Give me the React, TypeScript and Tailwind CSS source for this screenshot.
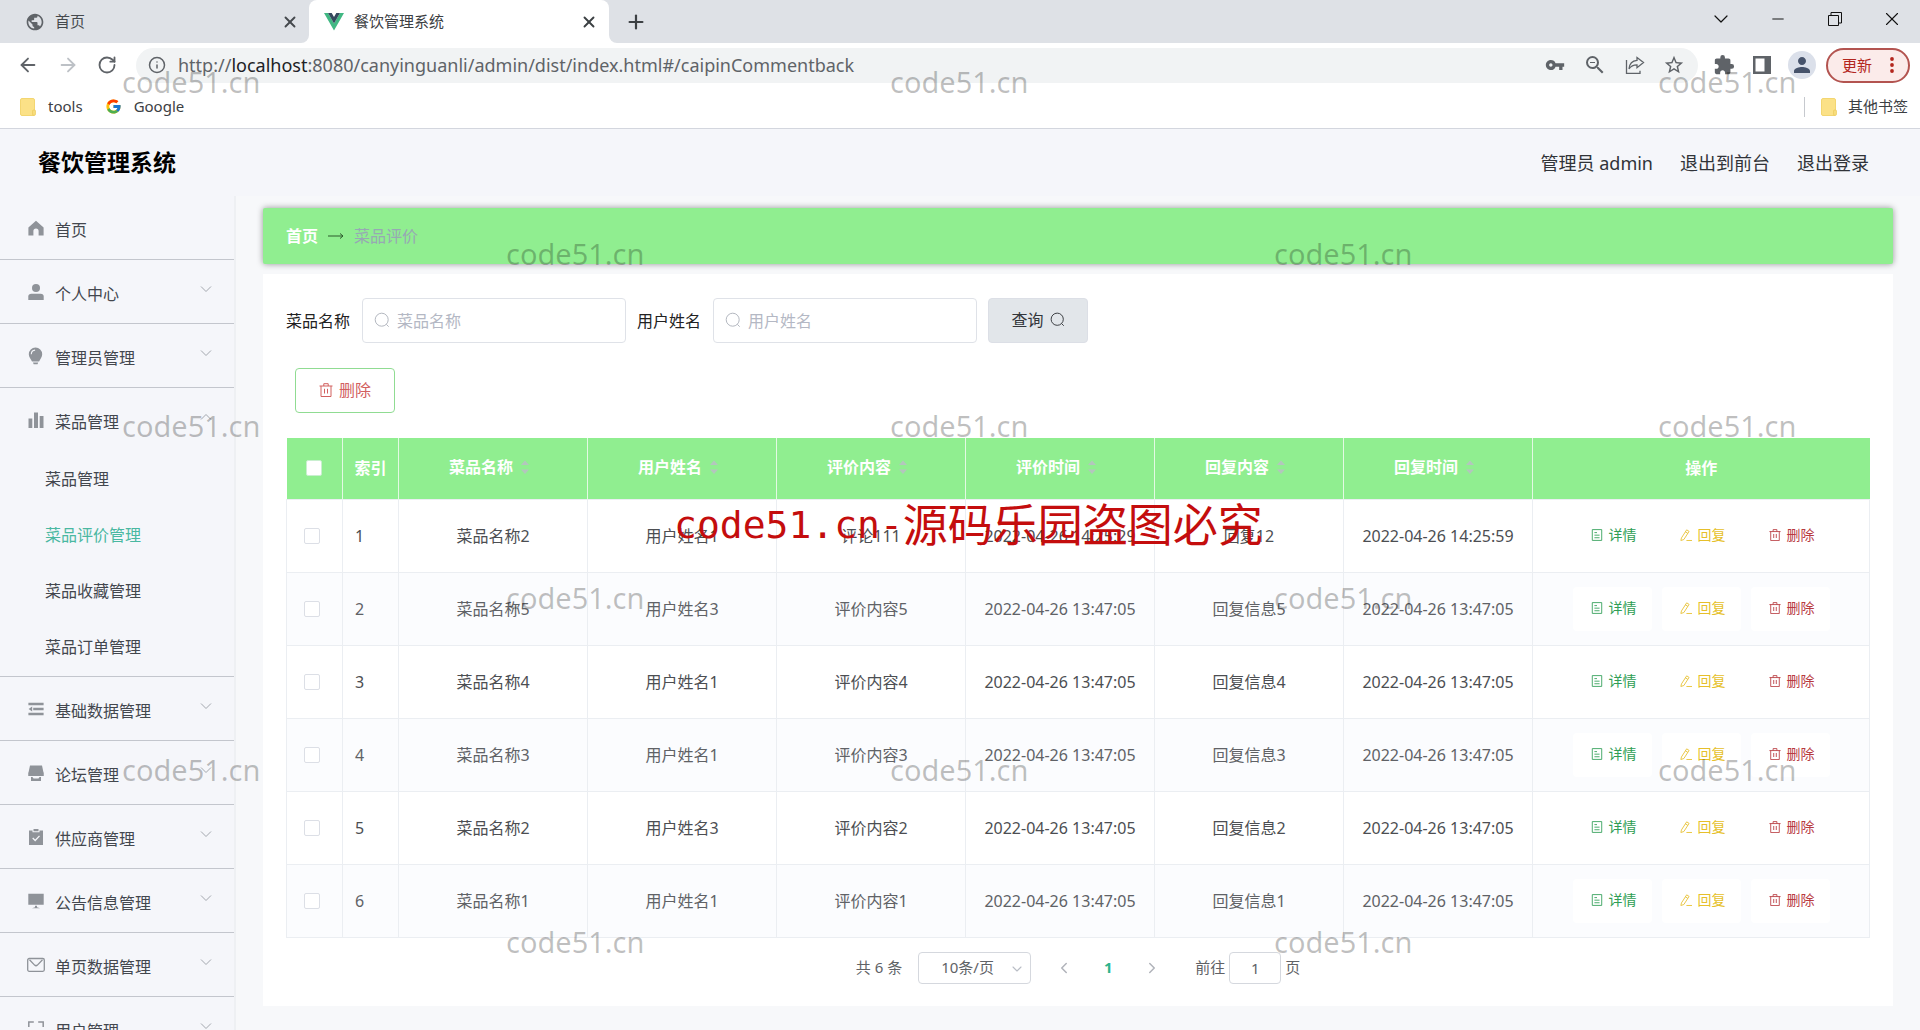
import React from 'react';
import { ArrowLeft, ArrowRight, ChevronDown, ChevronLeft, ChevronRight, Info, Minus, Plus, RotateCw, X } from 'lucide-react';
import { MdExtension, MdOutlineStarBorder, MdPerson, MdPublic, MdVpnKey, MdZoomOut } from 'react-icons/md';
import { FcGoogle } from 'react-icons/fc';

interface MenuItem {
  label: string;
  icon: React.ReactNode;
  children?: string[];
  expandable?: boolean;
}

interface CommentRow {
  dish: string;
  user: string;
  content: string;
  time: string;
  reply: string;
  replyTime: string;
}

// Filled 16px glyphs used by the side menu
function MenuIcon({ children }: { children: React.ReactNode }) {
  return (
    <svg viewBox="0 0 16 16" className="w-4 h-4 flex-shrink-0 overflow-visible" fill="#8f9399" stroke="none" aria-hidden="true">
      {children}
    </svg>
  );
}

const menu: MenuItem[] = [
  { label: '首页', icon: <MenuIcon><path d="M8 .8 15.6 7.5V15.5H10.6V11a2.6 2.6 0 0 0-5.2 0v4.5H.4V7.5z" /></MenuIcon> },
  {
    label: '个人中心',
    expandable: true,
    icon: <MenuIcon><circle cx="8" cy="4" r="4" /><path d="M.3 16v-3.4C.3 10.800 1.500 9.800 3.300 9.800h9.400c1.800 0 3 1 3 2.800V16z" /></MenuIcon>,
  },
  {
    label: '管理员管理',
    expandable: true,
    icon: (
      <MenuIcon>
        <path d="M7.500-.5a6.700 6.700 0 0 1 6.700 6.700c0 3-2 4.600-3.100 7.300H4C2.900 10.800.8 9.200.8 6.200A6.700 6.700 0 0 1 7.500-.5z" />
        <path d="M5 14.600h5.200l-.7 1.700H5.700z" />
        <path d="M3.300 6.200a4.200 4.200 0 0 1 3.800-4.100" fill="none" stroke="#f5f6fa" strokeWidth="1.100" />
      </MenuIcon>
    ),
  },
  {
    label: '菜品管理',
    expandable: true,
    children: ['菜品管理', '菜品评价管理', '菜品收藏管理', '菜品订单管理'],
    icon: <MenuIcon><path d="M.5 6.500h3.800V16H.5zM6 .5h4V16H6zM11.700 4h3.800v12h-3.800z" /></MenuIcon>,
  },
  {
    label: '基础数据管理',
    expandable: true,
    icon: <MenuIcon><path d="M.4 1.800h15.200v2.500H.4zM5.200 6.800h10.400v2.400H5.200zM.4 11.800h15.200v2.500H.4zM4.200 5.600v4.800L.6 8z" /></MenuIcon>,
  },
  {
    label: '论坛管理',
    expandable: true,
    icon: (
      <MenuIcon>
        <path d="M2 .5h12L15.600 8v3H13.300V9.200H2.700V11H.4V8z" />
        <path d="M.6 7.500h14.800v3.500H.6z" />
        <path d="M3 12h1.500l1 1.500h5l1-1.500H13v4H3z" />
      </MenuIcon>
    ),
  },
  {
    label: '供应商管理',
    expandable: true,
    icon: (
      <MenuIcon>
        <path d="M1 1.600h3.500v1.600h7V1.600H15V16H1zM5.500 0h5v2.300h-5z" />
        <path d="m4.700 9 2.500 2.500 4.300-4.600" fill="none" stroke="#f5f6fa" strokeWidth="1.300" />
      </MenuIcon>
    ),
  },
  {
    label: '公告信息管理',
    expandable: true,
    icon: <MenuIcon><path d="M.3.800h15.400v11H.3zM7 12.800h2v1.400l3 1.100H4l3-1.100z" /></MenuIcon>,
  },
  {
    label: '单页数据管理',
    expandable: true,
    icon: (
      <MenuIcon>
        <rect x="-.3" y="1.500" width="16.600" height="12.800" rx="1.500" fill="none" stroke="#8f9399" strokeWidth="1.300" />
        <path d="m1.500 2.800 5.100 5.300q1.400 1.300 2.800 0l5.100-5.300" fill="none" stroke="#8f9399" strokeWidth="1.300" />
      </MenuIcon>
    ),
  },
  {
    label: '用户管理',
    expandable: true,
    icon: (
      <MenuIcon>
        <path d="M.8 6V1h5M10.200 1h5v5M.8 10v5h5M10.200 15h5v-5" fill="none" stroke="#8f9399" strokeWidth="1.500" />
      </MenuIcon>
    ),
  },
];

const rows: CommentRow[] = [
  { dish: '菜品名称2', user: '用户姓名1', content: '评论111', time: '2022-04-26 14:25:29', reply: '回复12', replyTime: '2022-04-26 14:25:59' },
  { dish: '菜品名称5', user: '用户姓名3', content: '评价内容5', time: '2022-04-26 13:47:05', reply: '回复信息5', replyTime: '2022-04-26 13:47:05' },
  { dish: '菜品名称4', user: '用户姓名1', content: '评价内容4', time: '2022-04-26 13:47:05', reply: '回复信息4', replyTime: '2022-04-26 13:47:05' },
  { dish: '菜品名称3', user: '用户姓名1', content: '评价内容3', time: '2022-04-26 13:47:05', reply: '回复信息3', replyTime: '2022-04-26 13:47:05' },
  { dish: '菜品名称2', user: '用户姓名3', content: '评价内容2', time: '2022-04-26 13:47:05', reply: '回复信息2', replyTime: '2022-04-26 13:47:05' },
  { dish: '菜品名称1', user: '用户姓名1', content: '评价内容1', time: '2022-04-26 13:47:05', reply: '回复信息1', replyTime: '2022-04-26 13:47:05' },
];

const sortableColumns = ['菜品名称', '用户姓名', '评价内容', '评价时间', '回复内容', '回复时间'];

// Thin outline icons for the form and the table
function TrashIcon({ className }: { className: string }) {
  return (
    <svg viewBox="0 0 14 14" className={className} fill="none" stroke="currentColor" aria-hidden="true">
      <path d="M.5 3h13M2 3v10.500h10V3M4.800 3V.7h4.400V3M5.500 5.800v4.700M8.500 5.800v4.700" />
    </svg>
  );
}

function DocIcon({ className }: { className: string }) {
  return (
    <svg viewBox="0 0 14 14" className={className} fill="none" stroke="currentColor" aria-hidden="true">
      <path d="M1.500.7h11v12.600h-11zM4 4.200h3M4 7.200h6M4 10.200h6" />
    </svg>
  );
}

function EditIcon({ className }: { className: string }) {
  return (
    <svg viewBox="0 0 14 14" className={className} fill="none" stroke="currentColor" aria-hidden="true">
      <path d="M7.800 1 10.600 2.800 4.500 12.300 1 13.400 1.700 10.400zM6.300 3.300l2.800 1.800M7.500 13.400H14" />
    </svg>
  );
}

function SearchIcon({ className }: { className: string }) {
  return (
    <svg viewBox="0 0 16 16" className={className} fill="none" stroke="currentColor" aria-hidden="true">
      <circle cx="7.700" cy="7.700" r="6.500" />
      <path d="m12.300 12.300 2.400 2.400" />
    </svg>
  );
}

function FolderIcon() {
  return (
    <svg viewBox="0 0 16 18" className="w-4 h-[18px]" aria-hidden="true">
      <rect x=".5" y=".5" width="14" height="17" rx="1.500" fill="#fbe187" stroke="#f3d671" />
      <path d="M13 12h1.500a1 1 0 0 1 1 1v3a1.500 1.500 0 0 1-3 0v-3z" fill="#f7dc7c" stroke="#edcb5c" strokeWidth=".7" />
    </svg>
  );
}

function BrowserChrome() {
  return (
    <div className="bg-white border-b border-[#d3d6de] flex-shrink-0">
      {/* Tab strip */}
      <div className="flex h-[43px]">
        <div className="w-[309px] bg-[#dee1e6] rounded-br-lg flex items-center pl-[25px] pr-[10px]">
          <MdPublic className="w-5 h-5 text-[#5f6368]" />
          <span className="text-[15px] text-[#45494d] ml-[10px] flex-1">首页</span>
          <button aria-label="关闭首页"><X className="w-[18px] h-[18px] text-[#45494d]" strokeWidth={2.5} /></button>
        </div>
        <div className="w-[300px] bg-[#dee1e6]">
          <div className="h-full bg-white rounded-t-lg flex items-center pl-[15px] pr-[11px]">
            <svg viewBox="0 0 20 18" className="w-5 h-[18px]" aria-hidden="true">
              <path d="M0 0h4l6 10.500L16 0h4L10 17.500z" fill="#41b883" />
              <path d="M4 0h3.700L10 4l2.300-4H16l-6 10.500z" fill="#35495e" />
            </svg>
            <span className="text-[15px] text-[#3c4043] ml-[10px] flex-1">餐饮管理系统</span>
            <button aria-label="关闭餐饮管理系统"><X className="w-[18px] h-[18px] text-[#3c4043]" strokeWidth={2.5} /></button>
          </div>
        </div>
        <div className="flex-1 bg-[#dee1e6] rounded-bl-lg flex justify-between">
          <button aria-label="新标签页" className="pl-4"><Plus className="w-[22px] h-[22px] text-[#3c4043]" strokeWidth={2.4} /></button>
          <div className="flex h-[37px] text-[#111]">
            <button aria-label="搜索标签页" className="w-[57px] flex items-center justify-center"><ChevronDown className="w-6 h-6" strokeWidth={1.2} /></button>
            <button aria-label="最小化" className="w-[57px] flex items-center justify-center"><Minus className="w-[18px] h-[18px]" strokeWidth={1.3} /></button>
            <button aria-label="还原" className="w-[57px] flex items-center justify-center">
              <svg viewBox="0 0 14 14" className="w-[14px] h-[14px]" fill="none" stroke="currentColor"><path d="M.5 3.500h10v10H.5zM3 3.500V.5h10.500V11h-3" /></svg>
            </button>
            <button aria-label="关闭" className="w-[57px] flex items-center justify-center"><X className="w-[22px] h-[22px]" strokeWidth={1.2} /></button>
          </div>
        </div>
      </div>

      {/* Address bar */}
      <div className="flex items-center h-11 pl-[17px] pr-[10px] text-[#5f6368]">
        <button aria-label="后退" className="w-10"><ArrowLeft className="w-[22px] h-[22px]" /></button>
        <button aria-label="前进" className="w-10 text-[#bdc1c6]"><ArrowRight className="w-[22px] h-[22px]" /></button>
        <button aria-label="重新加载" className="w-[39px]"><RotateCw className="w-5 h-5" strokeWidth={2.2} /></button>
        <div className="flex-1 h-[35px] rounded-full bg-[#f1f3f4] flex items-center pl-3 pr-[13px]">
          <Info className="w-[18px] h-[18px] mr-3" />
          <span className="flex-1 text-lg text-[#5f6368]">
            http://<span className="text-[#202124]">localhost</span>:8080/canyinguanli/admin/dist/index.html#/caipinCommentback
          </span>
          <div className="flex items-center gap-[18px]">
            <MdVpnKey className="w-5 h-5" />
            <MdZoomOut className="w-6 h-6" />
            <svg viewBox="0 0 20 20" className="w-5 h-5" fill="none" stroke="currentColor" strokeWidth="1.300" aria-hidden="true">
              <path d="M1.500 5v13.300H15v-2.500M12 2.500l6.500 5L12 12.700V9.800c-3.500 0-6 1-8 4 .5-5 3.500-8 8-8.400z" />
            </svg>
            <MdOutlineStarBorder className="w-[22px] h-[22px]" />
          </div>
        </div>
        <div className="flex items-center gap-[14px] pl-[15px]">
          <MdExtension className="w-[22px] h-[22px]" />
          <svg viewBox="0 0 18 18" className="w-[18px] h-[18px] ml-1" aria-hidden="true">
            <path d="M0 0h18v18H0zM2.500 2.500v13h9v-13z" fill="#5f6368" fillRule="evenodd" />
          </svg>
          <span className="w-7 h-7 ml-[3px] rounded-full bg-[#dbe0ea] flex items-center justify-center"><MdPerson className="w-6 h-6 text-[#46536b]" /></span>
          <button className="w-[84px] h-[35px] -ml-1 rounded-full border-2 border-[#b35450] bg-[#fbebea] text-[#b3261e] text-[15px] flex items-center justify-between pl-[14px] pr-[14px]">
            更新
            <svg viewBox="0 0 4 16" className="w-1 h-4" fill="currentColor" aria-hidden="true"><circle cx="2" cy="2" r="1.900" /><circle cx="2" cy="8" r="1.900" /><circle cx="2" cy="14" r="1.900" /></svg>
          </button>
        </div>
      </div>

      {/* Bookmarks */}
      <div className="flex items-center h-[41px] pl-5 pr-3 pb-[2px] text-[15px] text-[#3c4043]">
        <a href="#tools" className="flex items-center gap-3"><FolderIcon />tools</a>
        <a href="#google" className="flex items-center gap-3 ml-[22px]"><FcGoogle className="w-[17px] h-[17px]" />Google</a>
        <a href="#others" className="flex items-center gap-[11px] ml-auto border-l border-[#c6c9ce] pl-4 h-5"><FolderIcon />其他书签</a>
      </div>
    </div>
  );
}

function Sidebar() {
  return (
    <nav className="w-[236px] flex-shrink-0 border-r-2 border-[#eef0f3] bg-[#f5f6fa] overflow-hidden text-base text-[#43474e]">
      {menu.map(item => (
        <div key={item.label} className="border-b border-[#c3c6cd]">
          <button className="w-full h-[63px] flex items-center pl-7 pr-[22px] text-left">
            {item.icon}
            <span className="ml-[11px] flex-1 pt-1">{item.label}</span>
            {item.expandable && (
              <svg viewBox="0 0 12 12" className="w-3 h-3 mb-[6px]" fill="none" stroke="#a3a7ae" aria-hidden="true">
                <path d={item.children ? 'M1 8.500 6 3.500l5 5' : 'M1 3.500l5 5 5-5'} />
              </svg>
            )}
          </button>
          {item.children && (
            <div className="pb-px">
              {item.children.map(child => (
                <a
                  key={child}
                  href="#/caipinCommentback"
                  className={`flex items-center h-14 pl-[45px] ${child === '菜品评价管理' ? 'text-[#4ab8a1]' : ''}`}
                >
                  {child}
                </a>
              ))}
            </div>
          )}
        </div>
      ))}
    </nav>
  );
}

function SearchField({ id, label }: { id: string; label: string }) {
  return (
    <div className="flex items-center">
      <label htmlFor={id} className="text-base text-[#222] mr-3">{label}</label>
      <div className="relative">
        <SearchIcon className="w-4 h-4 absolute left-3 top-[14px] text-[#b4b8c0]" />
        <input
          id={id}
          placeholder={label}
          className="w-[264px] h-[45px] border border-[#dfe2e8] rounded pl-[34px] pr-3 text-base bg-white placeholder:text-[#b4b8c4]"
        />
      </div>
    </div>
  );
}

function CommentTable() {
  return (
    <table className="w-full table-fixed border-collapse text-base">
      <colgroup>
        <col className="w-14" />
        <col className="w-14" />
        {sortableColumns.map(name => <col key={name} className="w-[189px]" />)}
        <col />
      </colgroup>
      <thead>
        <tr className="h-[61px] bg-[#90ee90] text-white">
          <th className="border-r border-[#e3f9e3]">
            <input type="checkbox" aria-label="全选" className="appearance-none block mx-auto w-4 h-4 bg-white border border-[#c9efcf] rounded-xs" />
          </th>
          <th className="border-r border-[#e3f9e3] font-bold">索引</th>
          {sortableColumns.map(name => (
            <th key={name} className="border-r border-[#e3f9e3] font-bold">
              <div className="flex items-center justify-center pb-[2px]">
                {name}
                <svg viewBox="0 0 24 16" className="w-6 h-4" fill="#b3c6bd" aria-hidden="true">
                  <path d="M12 1.500 16 6H8zM8 10.500h8L12 15z" />
                </svg>
              </div>
            </th>
          ))}
          <th className="font-bold">操作</th>
        </tr>
      </thead>
      <tbody>
        {rows.map((row, idx) => (
          <tr key={idx} className="h-[73px] text-center text-[#4c4e52] even:bg-[#fbfcfe] even:text-[#606266]">
            <td className="border border-[#ebeef2]">
              <input type="checkbox" aria-label={`选择第${idx + 1}行`} className="appearance-none block ml-[17px] w-4 h-4 bg-white border border-[#dcdfe6] rounded-xs" />
            </td>
            <td className="border border-[#ebeef2] text-left pl-3">{idx + 1}</td>
            <td className="border border-[#ebeef2]">{row.dish}</td>
            <td className="border border-[#ebeef2]">{row.user}</td>
            <td className="border border-[#ebeef2]">{row.content}</td>
            <td className="border border-[#ebeef2]">{row.time}</td>
            <td className="border border-[#ebeef2]">{row.reply}</td>
            <td className="border border-[#ebeef2]">{row.replyTime}</td>
            <td className="border border-[#ebeef2]">
              <div className="flex justify-center gap-[10px] text-sm">
                <button className="w-[79px] h-11 rounded bg-white flex items-center justify-center gap-[6px] pl-[3px] pb-[2px] text-[#2f9e55]"><DocIcon className="w-3 h-3" />详情</button>
                <button className="w-[79px] h-11 rounded bg-white flex items-center justify-center gap-[6px] pl-[3px] pb-[2px] text-[#e6bf2a]"><EditIcon className="w-3 h-3" />回复</button>
                <button className="w-[79px] h-11 rounded bg-white flex items-center justify-center gap-[6px] pl-[3px] pb-[2px] text-[#b83a3f]"><TrashIcon className="w-3 h-3" />删除</button>
              </div>
            </td>
          </tr>
        ))}
      </tbody>
    </table>
  );
}

function Pagination() {
  return (
    <div className="flex items-center justify-center mt-[14px] text-[15px] text-[#606266]">
      <span>共 6 条</span>
      <div className="relative ml-4">
        <select aria-label="每页条数" className="appearance-none w-[113px] h-8 border border-[#d5d8de] rounded bg-white pl-[22px]">
          <option>10条/页</option>
        </select>
        <ChevronDown className="w-4 h-4 absolute right-[6px] top-[9px] text-[#b9bdc5] pointer-events-none" strokeWidth={1.6} />
      </div>
      <button aria-label="上一页" className="ml-6"><ChevronLeft className="w-[18px] h-[18px] text-[#b0b3ba]" strokeWidth={2} /></button>
      <button className="w-[70px] font-bold text-[#2db38c]">1</button>
      <button aria-label="下一页"><ChevronRight className="w-[18px] h-[18px] text-[#b0b3ba]" strokeWidth={2} /></button>
      <label htmlFor="jump" className="ml-[34px]">前往</label>
      <input id="jump" defaultValue="1" className="w-[52px] h-8 ml-1 border border-[#d5d8de] rounded bg-white text-center" />
      <span className="ml-1">页</span>
    </div>
  );
}

// Repeating marks laid over the whole window
function Watermarks() {
  return (
    <div className="absolute inset-0 overflow-hidden pointer-events-none" aria-hidden="true">
      <div className="-mt-1">
        {[0, 1, 2, 3, 4, 5].map(line => (
          <div key={line} className={`flex h-[172px] items-center text-[29px] text-black/25 ${line % 2 === 0 ? 'pl-[122px]' : 'pl-[506px]'}`}>
            <span className="w-[768px] flex-shrink-0">code51.cn</span>
            <span className="w-[768px] flex-shrink-0">code51.cn</span>
            {line % 2 === 0 && <span className="flex-shrink-0">code51.cn</span>}
          </div>
        ))}
      </div>
      <div className="absolute left-[674px] top-[495px] flex items-center leading-[60px] text-[#c40d0d] whitespace-nowrap">
        <span className="font-['DejaVu_Sans_Mono',monospace] text-[38px]">code51.cn-</span>
        <span className="text-[45px]">源码乐园盗图必究</span>
      </div>
    </div>
  );
}

export default function App() {
  return (
    <div className="relative h-screen overflow-hidden flex flex-col bg-[#f7f8fa] font-['Noto_Sans','Noto_Sans_CJK_SC',sans-serif]">
      <BrowserChrome />

      {/* Header */}
      <header className="h-[67px] flex-shrink-0 bg-[#f5f6fa] flex items-center justify-between pl-[38px] pr-[51px]">
        <h1 className="text-[23px] font-bold text-black">餐饮管理系统</h1>
        <div className="flex items-center gap-[27px] text-lg text-[#303338]">
          <span>管理员 admin</span>
          <a href="#front">退出到前台</a>
          <a href="#logout">退出登录</a>
        </div>
      </header>

      <div className="flex flex-1 min-h-0">
        <Sidebar />
        <main className="flex-1 min-w-0 pl-[27px] pr-[27px] pt-3">
          {/* Breadcrumb */}
          <div className="h-14 bg-[#90ee90] rounded-xs shadow-[0_0_6px_rgba(0,0,0,0.4)] flex items-center pl-[23px] text-base">
            <a href="#home" className="font-bold text-white">首页</a>
            <svg viewBox="0 0 16 10" className="w-4 h-[10px] mx-[10px]" fill="none" stroke="#2c5a2c" aria-hidden="true">
              <path d="M0 5h15M12 2.500 15 5l-3 2.500" />
            </svg>
            <span className="text-[#97a8b4]">菜品评价</span>
          </div>

          {/* Content */}
          <section className="mt-[10px] bg-white px-[23px] pt-6 pb-[22px]">
            <form className="flex items-center gap-[11px]" onSubmit={e => e.preventDefault()}>
              <SearchField id="dish" label="菜品名称" />
              <SearchField id="user" label="用户姓名" />
              <button className="w-[100px] h-[45px] rounded bg-[#e2e6ea] border border-[#dcdfe6] text-[#33363b] text-base flex items-center justify-center gap-[6px] pb-[2px]">
                查询
                <SearchIcon className="w-[15px] h-[15px]" />
              </button>
            </form>
            <button className="mt-[25px] ml-[9px] w-[100px] h-[45px] rounded border border-[#90dc92] text-[#d2605f] text-base flex items-center justify-center gap-[6px] pb-[2px]">
              <TrashIcon className="w-[14px] h-[14px]" />
              删除
            </button>
            <div className="mt-[25px]">
              <CommentTable />
            </div>
            <Pagination />
          </section>
        </main>
      </div>

      <Watermarks />
    </div>
  );
}
